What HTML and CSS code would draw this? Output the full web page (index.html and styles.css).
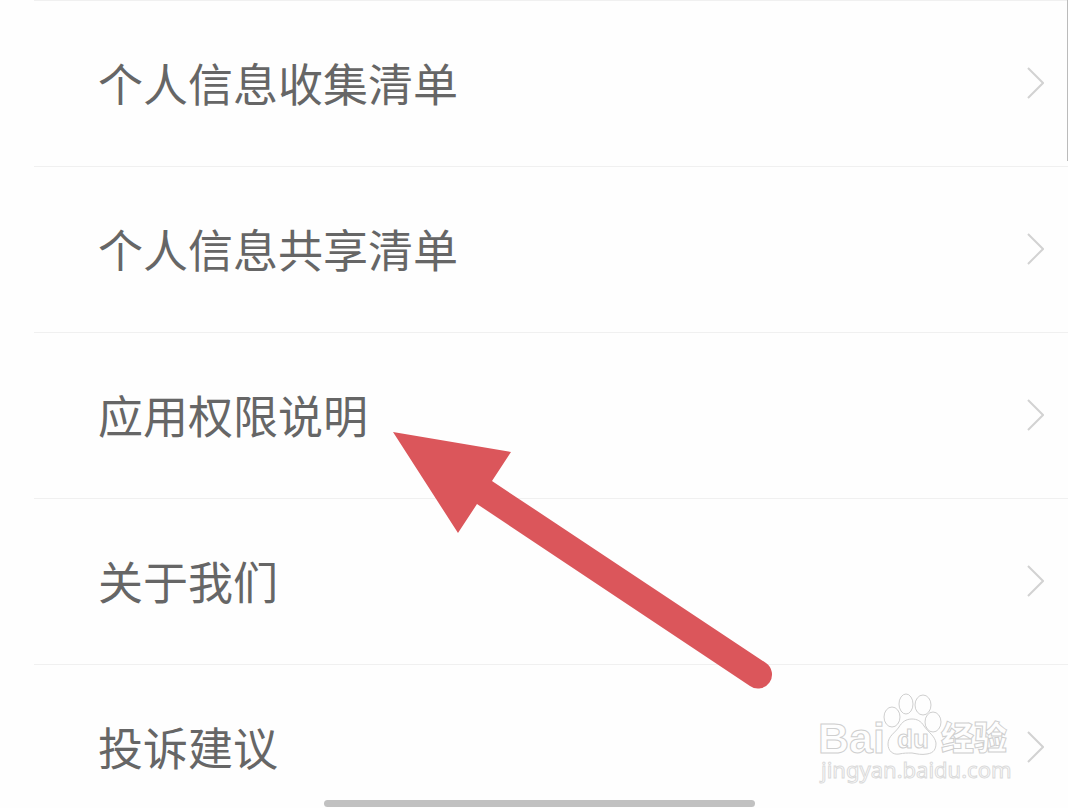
FILE: index.html
```html
<!DOCTYPE html>
<html lang="zh-CN">
<head>
    <meta charset="UTF-8">
    <meta name="viewport" content="width=device-width, initial-scale=1.0">
    <title>设置</title>
    <link rel="stylesheet" href="styles.css">
</head>
<body>
    <main class="screen">
        <nav class="menu">
            <a class="menu-item" href="#collect">
                <span>个人信息收集清单</span>
                <svg class="chevron" viewBox="0 0 18 32" aria-hidden="true"><path d="M2 1l15 15L2 31"/></svg>
            </a>
            <a class="menu-item" href="#share">
                <span>个人信息共享清单</span>
                <svg class="chevron" viewBox="0 0 18 32" aria-hidden="true"><path d="M2 1l15 15L2 31"/></svg>
            </a>
            <a class="menu-item" href="#permission">
                <span>应用权限说明</span>
                <svg class="chevron" viewBox="0 0 18 32" aria-hidden="true"><path d="M2 1l15 15L2 31"/></svg>
            </a>
            <a class="menu-item" href="#about">
                <span>关于我们</span>
                <svg class="chevron" viewBox="0 0 18 32" aria-hidden="true"><path d="M2 1l15 15L2 31"/></svg>
            </a>
            <a class="menu-item" href="#feedback">
                <span>投诉建议</span>
                <svg class="chevron" viewBox="0 0 18 32" aria-hidden="true"><path d="M2 1l15 15L2 31"/></svg>
            </a>
        </nav>

        <!-- arrow pointing at the permission row -->
        <svg class="arrow" viewBox="0 0 390 260" aria-hidden="true">
            <path d="M1 1L119 21L100 50L374 232A14 14 0 0 1 358 255L85 73L66 102Z"/>
        </svg>

        <svg class="watermark" viewBox="0 0 200 96" role="img" aria-label="Baidu 经验">
            <ellipse cx="78" cy="25" rx="8" ry="10"/>
            <ellipse cx="92" cy="12" rx="7" ry="10"/>
            <ellipse cx="109" cy="13" rx="8" ry="10"/>
            <ellipse cx="119" cy="30" rx="8" ry="10"/>
            <path d="M98 27C92 27 88 30 85 35C81 41 74 44 74 52C74 59 79 63 85 62C90 61 93 61 98 61C104 62 107 63 113 62C120 61 122 57 122 51C121 44 114 40 110 34C107 29 103 27 98 27Z"/>
            <text class="brand" x="4" y="61">Bai</text>
            <text class="brand-du" x="83" y="56">du</text>
            <text class="brand-cn" x="127" y="58">经验</text>
            <text class="site" x="7" y="86">jingyan.baidu.com</text>
        </svg>

        <div class="scrollbar"></div>
        <div class="home-bar"></div>
    </main>
</body>
</html>
```
FILE: styles.css
```css
body {
    margin: 0;
    background: #fefefe;
    font-family: "Noto Sans CJK SC", sans-serif;
}

.screen {
    position: relative;
    height: 100vh;
    overflow: hidden;
}

.menu {
    display: flex;
    flex-direction: column;
    padding-left: 34px;
}

.menu-item {
    display: flex;
    align-items: center;
    justify-content: space-between;
    box-sizing: border-box;
    height: 166px;
    padding: 0 24px 1px 64px;
    border-top: 1px solid #f0f0f0;
    color: #666;
    font-size: 45px;
    line-height: 64px;
    text-decoration: none;
}

.chevron {
    width: 18px;
    height: 32px;
    fill: none;
    stroke: #d2d2d2;
    stroke-width: 2;
}

.arrow {
    position: absolute;
    left: 392px;
    top: 431px;
    width: 390px;
    height: 260px;
    fill: #db565b;
}

.watermark {
    position: absolute;
    right: 54px;
    bottom: 20px;
    width: 200px;
    height: 96px;
    fill: #fefefe;
    stroke: #cfcfcf;
    stroke-width: 1;
    font-family: "Liberation Sans", sans-serif;
}

.brand {
    font-size: 43px;
    font-weight: 700;
}

.brand-du {
    font-size: 26px;
    font-weight: 700;
}

.brand-cn {
    font-family: "Noto Sans CJK SC", sans-serif;
    font-size: 33px;
    font-weight: 900;
}

.site {
    font-family: "Noto Sans", sans-serif;
    font-size: 22px;
    stroke: #dadada;
}

.scrollbar {
    position: absolute;
    top: 0;
    right: 0;
    width: 1px;
    height: 161px;
    background: #bbb;
}

.home-bar {
    position: absolute;
    left: 324px;
    right: 313px;
    bottom: 1px;
    height: 7px;
    border-radius: 4px;
    background: #c1c1c1;
}
```
